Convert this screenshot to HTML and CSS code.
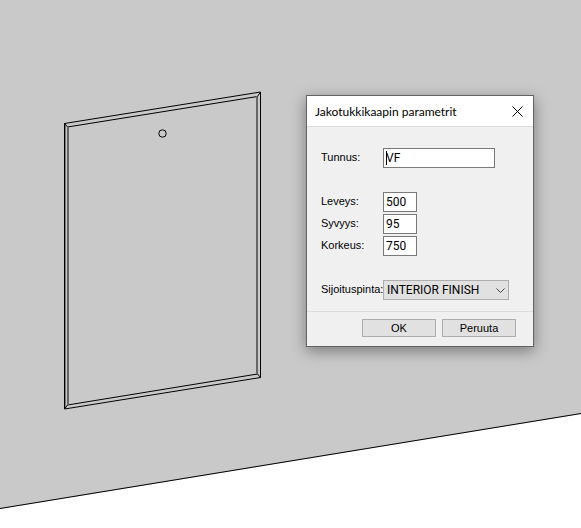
FILE: index.html
```
<!DOCTYPE html>
<html lang="fi">
<head>
    <meta charset="utf-8">
    <title>Jakotukkikaapin parametrit</title>
    <link rel="stylesheet" href="styles.css">
</head>
<body>

    <svg class="scene" viewBox="0 0 581 528" aria-hidden="true">
        <!-- wall -->
        <path class="wall" d="M0 0H581V414L0 509Z"/>
        <path class="edge" d="M0 508.500L581 413.500"/>
        <!-- cabinet door -->
        <path class="edge" d="M64.500 123.500L260.500 92"/>
        <path class="edge" d="M64.500 123V409"/>
        <path class="edge side" d="M65.500 124V408"/>
        <path class="edge" d="M260.500 92V377.500L64.500 409"/>
        <path class="edge" d="M67.500 127L257.500 96.500M257.500 374L67.500 405"/>
        <path class="edge soft" d="M68 127V405M257 96V374"/>
        <path class="edge" d="M64.500 123.500L67.500 127M260.500 92L257.500 96.500M260.500 377.500L257.500 374M64.500 409L67.500 405"/>
        <circle class="edge" cx="162.500" cy="133.500" r="3.700"/>
    </svg>

    <form class="dialog" role="dialog" aria-labelledby="dialogTitle">
        <header class="titlebar">
            <h1 class="title" id="dialogTitle">Jakotukkikaapin parametrit</h1>
            <button class="close" type="button" aria-label="Sulje">
                <svg width="11" height="11" viewBox="0 0 11 11"><path d="M0.500 0.500L10.500 10.500M10.500 0.500L0.500 10.500"/></svg>
            </button>
        </header>

        <div class="fields">
            <div class="group">
                <label for="tunnus">Tunnus:</label>
                <input class="wide" id="tunnus" type="text" value="VF">
            </div>
            <div class="group">
                <label for="leveys">Leveys:</label>
                <input class="number" id="leveys" type="text" value="500">
                <label for="syvyys">Syvyys:</label>
                <input class="number" id="syvyys" type="text" value="95">
                <label for="korkeus">Korkeus:</label>
                <input class="number" id="korkeus" type="text" value="750">
            </div>
            <div class="group">
                <label for="pinta">Sijoituspinta:</label>
                <div class="dropdown">
                    <select id="pinta">
                        <option>INTERIOR FINISH</option>
                    </select>
                    <svg class="arrow" width="9" height="5" viewBox="0 0 9 5"><path d="M0.500 0.500L4.500 4.500L8.500 0.500"/></svg>
                </div>
            </div>
        </div>

        <footer class="actions">
            <button class="action" type="submit">OK</button>
            <button class="action" type="button">Peruuta</button>
        </footer>
    </form>

</body>
</html>
```
FILE: styles.css
```
* {
    box-sizing: border-box;
}
body {
    margin: 0;
    background: #fff;
    color: #000;
    font-family: "Liberation Sans", Arial, sans-serif;
    font-size: 11px;
}
.scene {
    display: block;
    width: 100%;
}
.wall {
    fill: #c9c9c9;
}
.edge {
    fill: none;
    stroke: #000;
    stroke-width: 1;
}
.side {
    stroke: #777;
}
.soft {
    stroke: #666;
    stroke-width: 2;
}

/* dialog window floating over the model view */
.dialog {
    position: absolute;
    left: 306px;
    top: 95px;
    width: 228px;
    background: #f0f0f0;
    border: 1px solid #626262;
    box-shadow: 0 4px 14px rgba(0, 0, 0, 0.4);
}
.titlebar {
    display: flex;
    align-items: center;
    justify-content: space-between;
    height: 31px;
    padding: 0 10px 0 8px;
    background: #fff;
    border-bottom: 1px solid #dcdcdc;
}
.title {
    margin: 0;
    font-family: Lato, "Open Sans", sans-serif;
    font-size: 12px;
    font-weight: normal;
}
.close {
    display: flex;
    padding: 0;
    background: none;
    border: none;
}
.close path,
.arrow path {
    fill: none;
    stroke: #000;
}
.fields {
    display: grid;
    gap: 24px;
    padding: 21px 14px 11px;
}
.group {
    display: grid;
    grid-template-columns: 62px 1fr;
    gap: 2px 0;
}
label {
    line-height: 18px;
    white-space: nowrap;
}
input,
select,
.action {
    color: #000;
    font: inherit;
    border-radius: 0;
}
input,
select {
    font-family: Roboto, "Liberation Sans", sans-serif;
    font-size: 12px;
}
input {
    height: 20px;
    padding: 0 2px;
    background: #fff;
    border: 1px solid #7a7a7a;
    outline: none;
}
.wide {
    width: 112px;
    /* text cursor */
    background: linear-gradient(#000, #000) 2px 2px / 1px 14px no-repeat #fff;
    caret-color: transparent;
}
.number {
    width: 34px;
}
.dropdown {
    position: relative;
    width: 126px;
}
select {
    display: block;
    width: 100%;
    height: 20px;
    padding: 0 3px;
    background: #e1e1e1;
    border: 1px solid #adadad;
    appearance: none;
}
.arrow {
    position: absolute;
    right: 4px;
    top: 8px;
    pointer-events: none;
}
.arrow path {
    stroke: #444;
}
.actions {
    display: flex;
    justify-content: flex-end;
    gap: 6px;
    padding: 7px 17px 9px;
    border-top: 1px solid #dcdcdc;
}
.action {
    width: 74px;
    height: 18px;
    padding: 0;
    background: #e1e1e1;
    border: 1px solid #adadad;
}
```
